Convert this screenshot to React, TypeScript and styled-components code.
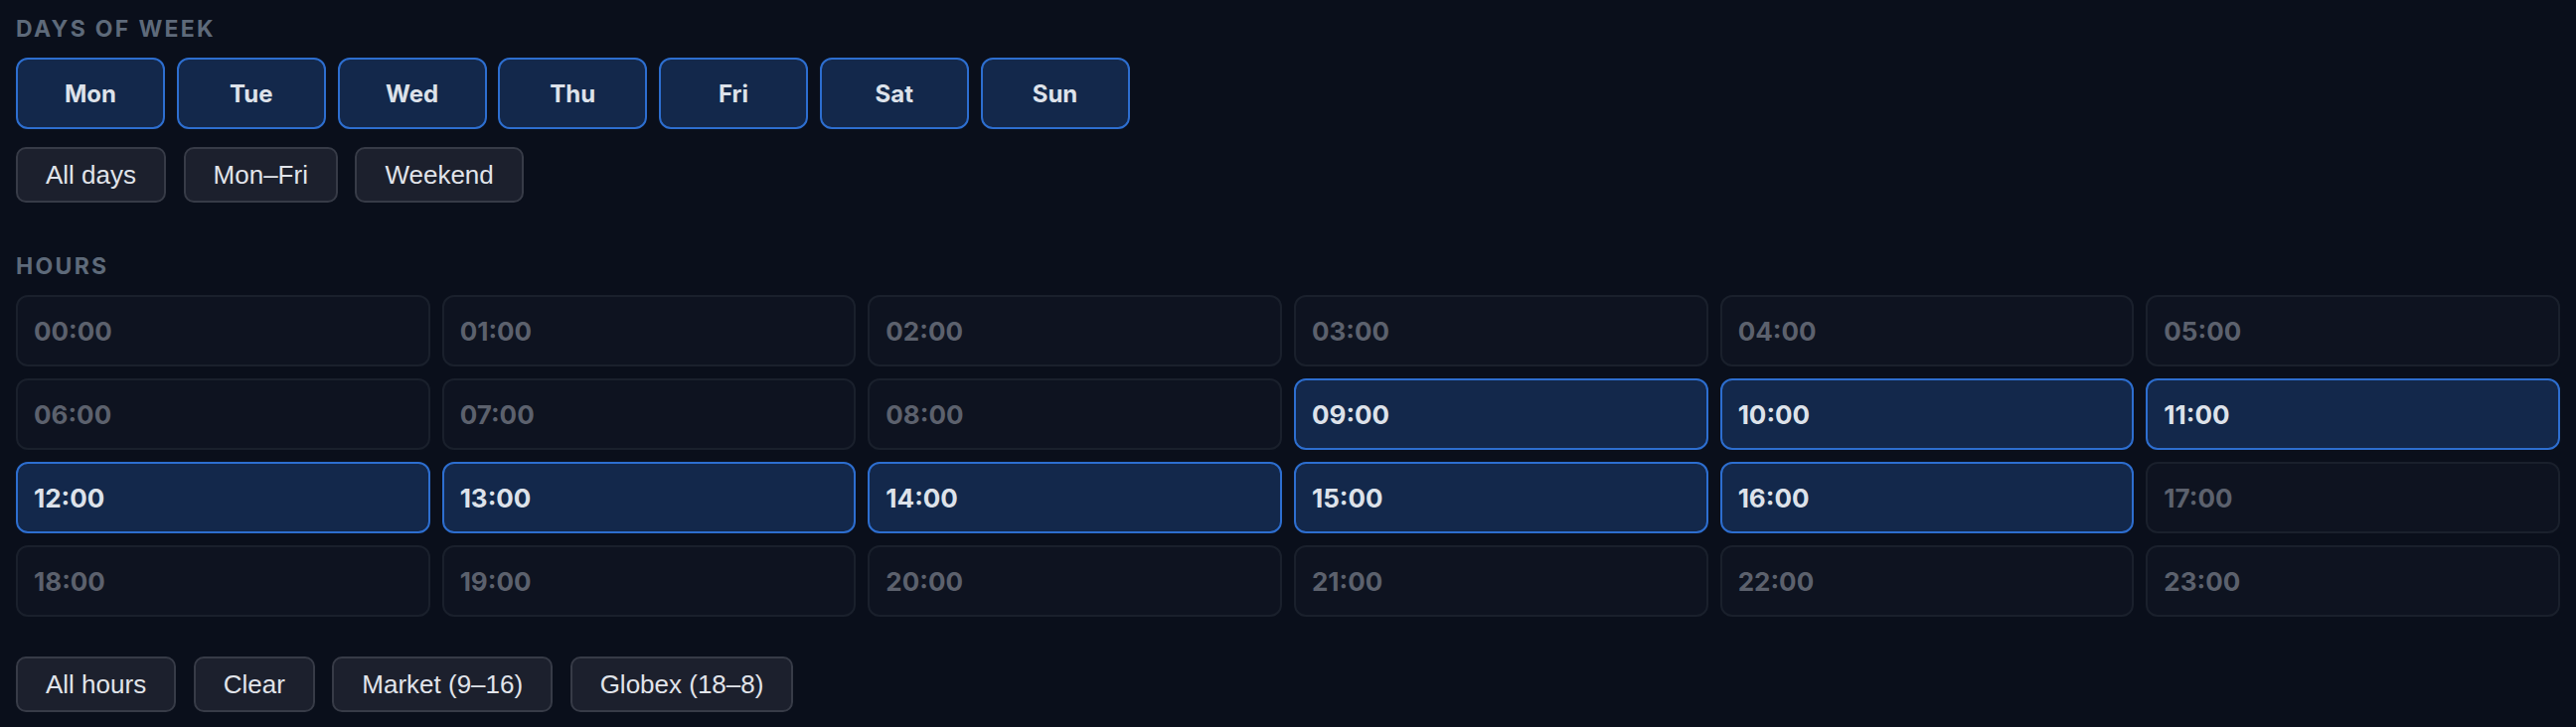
import React from "react";
import styled, { createGlobalStyle, css } from "styled-components";

const GlobalStyle = createGlobalStyle`
  html, body {
    margin: 0;
    padding: 0;
    background: #0a0f1b;
  }
  * { box-sizing: border-box; }
`;

const Page = styled.div`
  min-height: 100vh;
  background: #0a0f1b;
  padding: 16px;
  font-family: Inter, "Noto Sans", sans-serif;
`;

const Section = styled.section<{ $gapTop?: number }>`
  display: flex;
  flex-direction: column;
  margin-top: ${(p) => p.$gapTop ?? 0}px;
`;

const SectionLabel = styled.div`
  font-family: Inter, "Noto Sans", sans-serif;
  font-size: 23px;
  line-height: 26px;
  font-weight: 700;
  letter-spacing: 0.1em;
  text-transform: uppercase;
  color: #5e6a7a;
  margin-bottom: 16px;
`;

const DayRow = styled.div`
  display: flex;
  gap: 11.75px;
`;

const selectedLook = css`
  background: #13284b;
  border: 2px solid #2d6ecf;
  color: #dde2ea;
`;

const DayButton = styled.button<{ $active: boolean }>`
  width: 150px;
  height: 72px;
  border-radius: 12px;
  font-family: Inter, "Noto Sans", sans-serif;
  font-size: 24px;
  font-weight: 700;
  padding: 0;
  cursor: pointer;
  ${(p) =>
    p.$active
      ? selectedLook
      : css`
          background: #0e1421;
          border: 2px solid #1b2130;
          color: #5b606c;
        `}
`;

const ActionRow = styled.div<{ $gapTop: number }>`
  display: flex;
  gap: 17.5px;
  margin-top: ${(p) => p.$gapTop}px;
`;

const ActionButton = styled.button`
  height: 56px;
  padding: 0 28px;
  border-radius: 10px;
  background: #1c202d;
  border: 2px solid #373b47;
  color: #e1e4ea;
  font-family: "Liberation Sans", Arial, sans-serif;
  font-size: 26px;
  font-weight: 400;
  cursor: pointer;
  white-space: nowrap;
`;

const HourGrid = styled.div`
  display: grid;
  grid-template-columns: repeat(6, 1fr);
  gap: 12px;
`;

const HourCell = styled.button<{ $active: boolean }>`
  height: 72px;
  border-radius: 12px;
  padding: 0 16px;
  text-align: left;
  font-family: Inter, "Noto Sans", sans-serif;
  font-size: 26px;
  font-weight: 700;
  cursor: pointer;
  ${(p) =>
    p.$active
      ? selectedLook
      : css`
          background: #0e1320;
          border: 2px solid #1a202c;
          color: #5c616d;
        `}
`;

const days = ["Mon", "Tue", "Wed", "Thu", "Fri", "Sat", "Sun"];
const hours = Array.from({ length: 24 }, (_, i) => i);
const activeHours = new Set([9, 10, 11, 12, 13, 14, 15, 16]);

export default function App() {
  return (
    <>
      <GlobalStyle />
      <Page>
        <Section>
          <SectionLabel>Days of week</SectionLabel>
          <DayRow>
            {days.map((d) => (
              <DayButton key={d} $active>
                {d}
              </DayButton>
            ))}
          </DayRow>
          <ActionRow $gapTop={18}>
            <ActionButton>All days</ActionButton>
            <ActionButton>Mon–Fri</ActionButton>
            <ActionButton>Weekend</ActionButton>
          </ActionRow>
        </Section>
        <Section $gapTop={51}>
          <SectionLabel>Hours</SectionLabel>
          <HourGrid>
            {hours.map((h) => (
              <HourCell key={h} $active={activeHours.has(h)}>
                {String(h).padStart(2, "0")}:00
              </HourCell>
            ))}
          </HourGrid>
          <ActionRow $gapTop={40}>
            <ActionButton>All hours</ActionButton>
            <ActionButton>Clear</ActionButton>
            <ActionButton>Market (9–16)</ActionButton>
            <ActionButton>Globex (18–8)</ActionButton>
          </ActionRow>
        </Section>
      </Page>
    </>
  );
}
